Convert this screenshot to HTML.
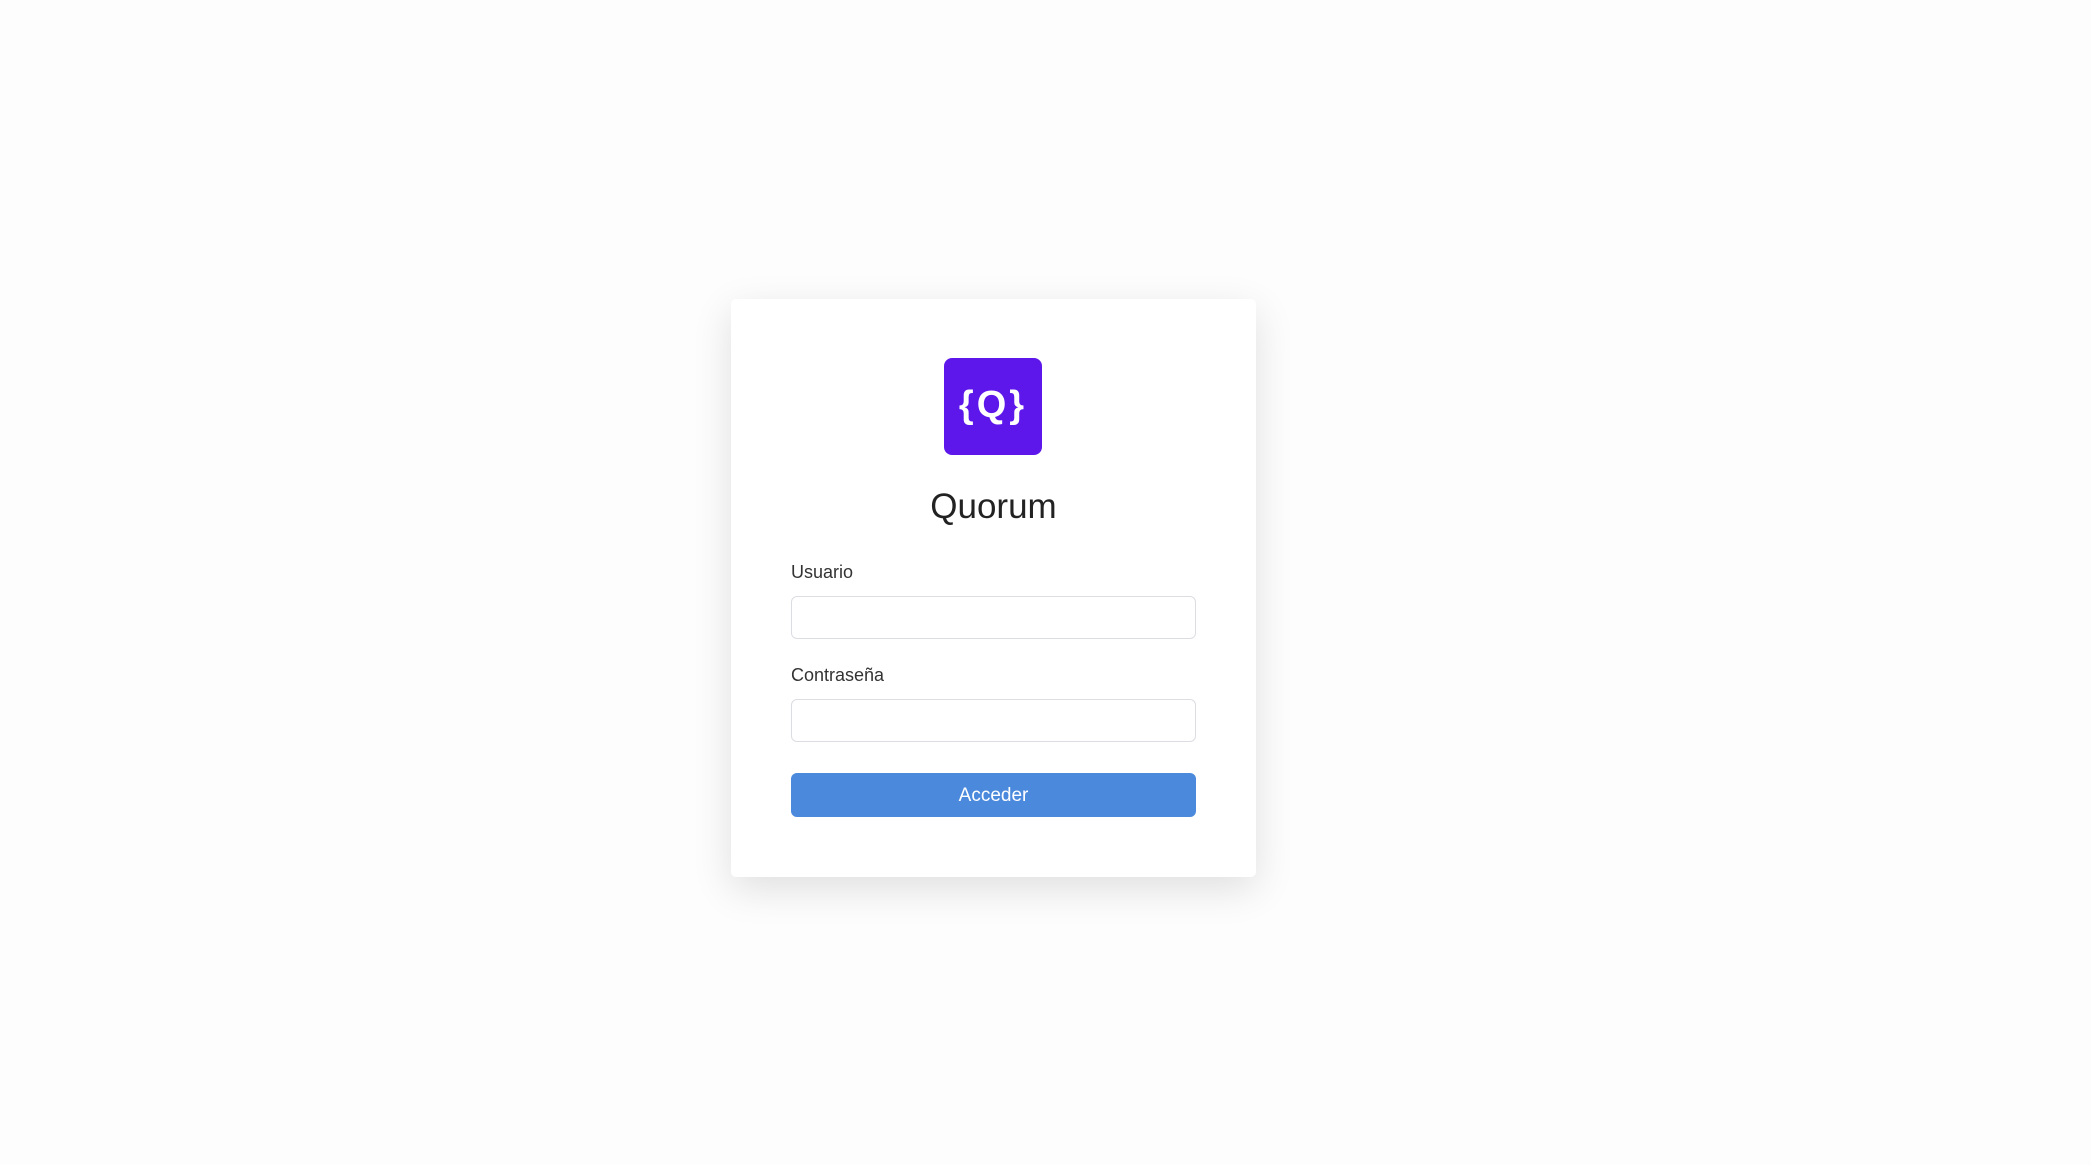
<!DOCTYPE html>
<html><head><meta charset="utf-8"><style>
html,body{margin:0;padding:0;width:2091px;height:1165px;background:#fdfdfd;font-family:"Liberation Sans",sans-serif;overflow:hidden}
.card{position:absolute;left:731px;top:299px;width:525px;height:578px;background:#fff;border-radius:5px;box-shadow:0 12px 40px rgba(0,0,0,0.12)}
.logo{position:absolute;left:213px;top:59px;width:98px;height:97px;background:#5e17eb;border-radius:8px;color:#fff;font-weight:bold;font-size:38px;text-align:center;line-height:95px;letter-spacing:3px}
.title{position:absolute;left:0;width:525px;top:188px;text-align:center;font-size:35px;color:#222}
.lbl{position:absolute;left:60px;font-size:18px;color:#333}
.inp{position:absolute;left:60px;width:403px;height:41px;border:1px solid #dcdde2;border-radius:6px}
.btn{position:absolute;left:60px;top:474px;width:405px;height:44px;background:#4a89dc;border-radius:6px;color:#fff;font-size:19px;text-align:center;line-height:45px}
</style></head><body>
<div class="card">
<div class="logo">{Q}</div>
<div class="title">Quorum</div>
<div class="lbl" style="top:263px">Usuario</div>
<div class="inp" style="top:297px"></div>
<div class="lbl" style="top:366px">Contraseña</div>
<div class="inp" style="top:400px"></div>
<div class="btn">Acceder</div>
</div>
</body></html>
